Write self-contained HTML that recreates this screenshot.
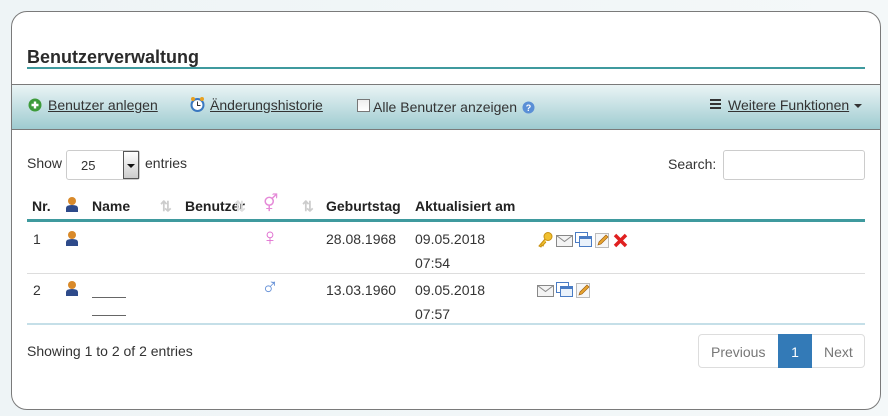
<!DOCTYPE html>
<html><head><meta charset="utf-8"><style>
*{margin:0;padding:0;box-sizing:border-box}
body{width:888px;height:416px;background:linear-gradient(90deg,#eef4f6,#f4f8f9);font-family:"Liberation Sans",sans-serif;font-size:14px;color:#333;position:relative;overflow:hidden}
.p{position:absolute;left:11px;top:11px;width:870px;height:399px;background:#fff;border:1px solid #7a7a7a;border-radius:16px;overflow:hidden}
.a{position:absolute;white-space:nowrap}
a{color:#333;text-decoration:underline}
.b{font-weight:bold;color:#222}
.ic{position:absolute}
</style></head><body>
<div class="p">
<div class="a" style="left:15px;top:35px;font-size:18px;font-weight:bold;color:#2b2b2b">Benutzerverwaltung</div>
<div class="a" style="left:15px;top:55px;width:838px;height:2px;background:#3f9a9e"></div>
<div class="a" style="left:0;top:72px;width:870px;height:1px;background:#7a7a7a"></div>
<div class="a" style="left:0;top:73px;width:870px;height:44px;background:linear-gradient(#eaf4f5,#9ecbd0)"></div>
<div class="a" style="left:0;top:117px;width:870px;height:1px;background:#7a7a7a"></div>
<svg class="ic" style="left:16px;top:86px" width="14" height="14"><circle cx="7" cy="7" r="6.5" fill="#3d9b3a"/><path d="M7 3.5v7M3.5 7h7" stroke="#fff" stroke-width="2.4"/></svg>
<div class="a" style="left:36px;top:85px"><a>Benutzer anlegen</a></div>
<svg class="ic" style="left:178px;top:84px" width="15" height="16"><circle cx="7.5" cy="9" r="6" fill="#fff" stroke="#3a78c0" stroke-width="2"/><circle cx="3" cy="3" r="2" fill="#e8a020"/><circle cx="12" cy="3" r="2" fill="#e8a020"/><path d="M7.5 5.5v4h3" stroke="#333" fill="none"/></svg>
<div class="a" style="left:198px;top:85px"><a>Änderungshistorie</a></div>
<div class="a" style="left:345px;top:87px;width:13px;height:13px;border:1px solid #777;background:linear-gradient(#eee,#fff)"></div>
<div class="a" style="left:361px;top:87px">Alle Benutzer anzeigen</div>
<svg class="ic" style="left:510px;top:89px" width="13" height="13"><circle cx="6.5" cy="6.5" r="6" fill="#5a8fd6"/><text x="6.5" y="10" font-size="9" text-anchor="middle" fill="#fff" font-family="Liberation Sans" font-weight="bold">?</text></svg>
<div class="a" style="left:698px;top:87px;width:11px;height:2px;background:#333;box-shadow:0 4px #333,0 8px #333"></div>
<div class="a" style="left:716px;top:85px"><a>Weitere Funktionen</a></div>
<div class="a" style="left:842px;top:92px;border:4px solid transparent;border-top-color:#333;border-bottom:0"></div>

<div class="a" style="left:15px;top:143px">Show</div>
<div class="a" style="left:54px;top:138px;width:74px;height:30px;border:1px solid #ccc;border-radius:3px;font-size:13px;padding:7px 0 0 14px">25</div>
<div class="a" style="left:111px;top:139px;width:16px;height:28px;border:1px solid #555;background:linear-gradient(#fff,#ccc)"></div>
<div class="a" style="left:115px;top:152px;border:4px solid transparent;border-top-color:#111;border-bottom:0"></div>
<div class="a" style="left:133px;top:143px">entries</div>
<div class="a" style="left:656px;top:144px">Search:</div>
<div class="a" style="left:711px;top:138px;width:142px;height:30px;border:1px solid #ccc;border-radius:3px"></div>

<div class="a b" style="left:20px;top:186px">Nr.</div>
<svg class="ic" style="left:53px;top:184px" width="15" height="16"><circle cx="7" cy="5" r="4" fill="#d98a2a"/><path d="M1 16v-4q0-3 6-3t6 3v4z" fill="#2e4a8a"/></svg>
<div class="a b" style="left:80px;top:186px">Name</div>
<div class="a" style="left:148px;top:186px;color:#ccc;font-weight:bold">⇅</div>
<div class="a b" style="left:173px;top:186px">Benutzer</div>
<div class="a" style="left:222px;top:186px;color:#ddd;font-weight:bold">⇅</div>
<div class="a" style="left:251px;top:182px;color:#e58ad8;font-size:17px">⚥</div>
<div class="a" style="left:290px;top:186px;color:#ccc;font-weight:bold">⇅</div>
<div class="a b" style="left:314px;top:186px">Geburtstag</div>
<div class="a b" style="left:403px;top:186px">Aktualisiert am</div>
<div class="a" style="left:15px;top:207px;width:838px;height:3px;background:#3f9a9e"></div>

<div class="a" style="left:21px;top:219px">1</div>
<svg class="ic" style="left:53px;top:218px" width="15" height="16"><circle cx="7" cy="5" r="4" fill="#d98a2a"/><path d="M1 16v-4q0-3 6-3t6 3v4z" fill="#2e4a8a"/></svg>
<div class="a" style="left:249px;top:212px;color:#e070d0;font-size:24px">♀</div>
<div class="a" style="left:314px;top:219px">28.08.1968</div>
<div class="a" style="left:403px;top:215px;line-height:24px">09.05.2018<br>07:54</div>
<svg class="ic" style="left:525px;top:220px" width="95" height="16">
<circle cx="11" cy="4.5" r="4" fill="#f0c030" stroke="#c89010"/><path d="M8 7L2 14l2 1 1-2 1 1 1-2 2-2" fill="#f0c030" stroke="#c89010"/>
<rect x="19.5" y="3.5" width="16" height="11" fill="#f4f4f4" stroke="#888"/><path d="M19.5 3.5l8 6 8-6" fill="none" stroke="#888"/>
<rect x="38.5" y="0.5" width="12" height="10" fill="#fff" stroke="#4a7cc4"/><rect x="42.5" y="4.5" width="12" height="10" fill="#eaf2fb" stroke="#4a7cc4"/><rect x="43" y="5" width="11" height="2" fill="#4a7cc4"/>
<rect x="58.5" y="1.5" width="13" height="14" fill="#f7f7f7" stroke="#bbb"/><path d="M61 13l1-3 7-7 2 2-7 7z" fill="#e8a530" stroke="#a06010" stroke-width=".7"/>
<path d="M78 3l11 11M89 3L78 14" stroke="#e02020" stroke-width="3.5"/></svg>
<div class="a" style="left:15px;top:261px;width:838px;height:1px;background:#ddd"></div>

<div class="a" style="left:21px;top:270px">2</div>
<svg class="ic" style="left:53px;top:268px" width="15" height="16"><circle cx="7" cy="5" r="4" fill="#d98a2a"/><path d="M1 16v-4q0-3 6-3t6 3v4z" fill="#2e4a8a"/></svg>
<div class="a" style="left:80px;top:285px;width:34px;height:1px;background:#666"></div>
<div class="a" style="left:80px;top:303px;width:34px;height:1px;background:#666"></div>
<div class="a" style="left:249px;top:262px;color:#6a94d8;font-size:24px">♂</div>
<div class="a" style="left:314px;top:270px">13.03.1960</div>
<div class="a" style="left:403px;top:266px;line-height:24px">09.05.2018<br>07:57</div>
<svg class="ic" style="left:525px;top:270px" width="60" height="16">
<rect x="0.5" y="3.5" width="16" height="11" fill="#f4f4f4" stroke="#888"/><path d="M0.5 3.5l8 6 8-6" fill="none" stroke="#888"/>
<rect x="19.5" y="0.5" width="12" height="10" fill="#fff" stroke="#4a7cc4"/><rect x="23.5" y="4.5" width="12" height="10" fill="#eaf2fb" stroke="#4a7cc4"/><rect x="24" y="5" width="11" height="2" fill="#4a7cc4"/>
<rect x="39.5" y="1.5" width="13" height="14" fill="#f7f7f7" stroke="#bbb"/><path d="M42 13l1-3 7-7 2 2-7 7z" fill="#e8a530" stroke="#a06010" stroke-width=".7"/></svg>
<div class="a" style="left:15px;top:311px;width:838px;height:2px;background:#c5dfe8"></div>

<div class="a" style="left:15px;top:331px;font-size:14px">Showing 1 to 2 of 2 entries</div>
<div class="a" style="left:686px;top:322px;width:167px;height:34px;border:1px solid #ddd;border-radius:4px"></div>
<div class="a" style="left:699px;top:332px;color:#777">Previous</div>
<div class="a" style="left:766px;top:322px;width:34px;height:34px;background:#337ab7;color:#fff;text-align:center;padding-top:10px">1</div>
<div class="a" style="left:812px;top:332px;color:#777">Next</div>
</div>
</body></html>
